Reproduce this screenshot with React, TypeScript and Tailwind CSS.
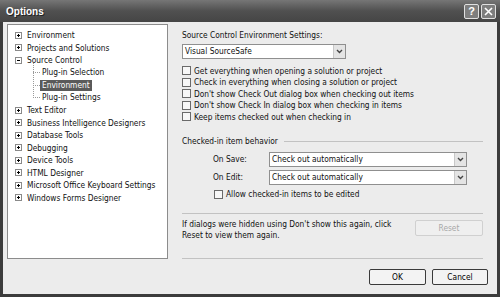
import React from "react";

const FONT = { fontFamily: '"DejaVu Sans Condensed", "DejaVu Sans", sans-serif' };

function Box({ minus }: { minus?: boolean }) {
  return (
    <div className="relative w-[7px] h-[7px] border border-[#8a8a8a] bg-white shrink-0">
      <div className="absolute left-[1px] top-[2px] w-[3px] h-[1px] bg-black" />
      {!minus && <div className="absolute left-[2px] top-[1px] w-[1px] h-[3px] bg-black" />}
    </div>
  );
}

function TopItem({ label, minus }: { label: string; minus?: boolean }) {
  return (
    <div className="h-[12.5px] flex items-center pl-[7px]">
      <Box minus={minus} />
      <span className="ml-[5px] whitespace-nowrap">{label}</span>
    </div>
  );
}

function ChildItem({ label, selected }: { label: string; selected?: boolean }) {
  return (
    <div className="h-[12.5px] flex items-center pl-[25px] relative">
      <div className="w-[7px] h-0 border-t border-dotted border-[#9a9a9a]" />
      <span
        className={
          "whitespace-nowrap px-[2px] leading-[11px] " +
          (selected ? "bg-[#5a5a5a] text-white" : "")
        }
      >
        {label}
      </span>
    </div>
  );
}

function Check({ label, className = "" }: { label: string; className?: string }) {
  return (
    <div className={"h-[11.5px] flex items-center " + className}>
      <div className="w-[9px] h-[9px] border border-[#6a6a6a] bg-[#f7f7f7] shrink-0" />
      <span className="ml-[3px] whitespace-nowrap">{label}</span>
    </div>
  );
}

function Arrow() {
  return (
    <div className="w-[12px] h-full border-l border-[#c8c8c8] bg-[#e4e4e4] flex items-center justify-center">
      <svg width="7" height="5" viewBox="0 0 7 5">
        <path d="M1 1 L3.5 3.5 L6 1" fill="none" stroke="#444" strokeWidth="1.4" />
      </svg>
    </div>
  );
}

function Select({ value, className = "" }: { value: string; className?: string }) {
  return (
    <div
      className={
        "h-[15px] border border-[#8f8f8f] bg-white flex items-center justify-between " + className
      }
    >
      <span className="pl-[2px] whitespace-nowrap">{value}</span>
      <Arrow />
    </div>
  );
}

function Btn({ label, disabled, className = "" }: { label: string; disabled?: boolean; className?: string }) {
  return (
    <div
      className={
        "h-[16px] rounded-[2px] flex items-center justify-center " +
        (disabled
          ? "border border-[#d0d0d0] text-[#a8a8a8] bg-[#efefef] "
          : "border border-[#3a3a3a] bg-[#f3f3f3] text-black ") +
        className
      }
    >
      {label}
    </div>
  );
}

export default function App() {
  return (
    <div
      className="w-[500px] h-[297px] flex flex-col bg-[#3c3c3c] text-[8.3px] text-[#111] overflow-hidden"
      style={FONT}
    >
      {/* title bar */}
      <div className="h-[22px] shrink-0 bg-gradient-to-b from-[#767676] via-[#505050] to-[#454545] flex items-center justify-between pl-[6px] pr-[4px]">
        <span
          className="text-white font-bold text-[10px] [text-shadow:1px_1px_0_#222]"
          style={{ fontFamily: '"Liberation Sans", Arial, sans-serif' }}
        >
          Options
        </span>
        <div className="flex gap-[2px] mt-[1px]">
          <div
            className="w-[15px] h-[15px] rounded-[2px] border border-[#e0e0e0] bg-[#7e7e7e] flex items-center justify-center text-white font-bold text-[11px]"
            style={{ fontFamily: '"Liberation Sans", Arial, sans-serif' }}
          >
            ?
          </div>
          <div className="w-[15px] h-[15px] rounded-[2px] border border-[#e0e0e0] bg-[#7e7e7e] flex items-center justify-center">
            <svg width="9" height="9" viewBox="0 0 9 9">
              <path d="M1 1 L8 8 M8 1 L1 8" stroke="white" strokeWidth="1.6" />
            </svg>
          </div>
        </div>
      </div>

      {/* body */}
      <div className="flex-1 mx-[3px] mb-[3px] bg-[#ececec] flex pt-[2px] pl-[4px]">
        {/* tree */}
        <div className="w-[161px] h-[235px] border border-[#8c8c8c] bg-white pt-[4px] shrink-0">
          <TopItem label="Environment" />
          <TopItem label="Projects and Solutions" />
          <TopItem label="Source Control" minus />
          <div className="relative">
            <div className="absolute left-[25px] top-[-4px] h-[35px] border-l border-dotted border-[#9a9a9a]" />
            <ChildItem label="Plug-in Selection" />
            <ChildItem label="Environment" selected />
            <ChildItem label="Plug-in Settings" />
          </div>
          <TopItem label="Text Editor" />
          <TopItem label="Business Intelligence Designers" />
          <TopItem label="Database Tools" />
          <TopItem label="Debugging" />
          <TopItem label="Device Tools" />
          <TopItem label="HTML Designer" />
          <TopItem label="Microsoft Office Keyboard Settings" />
          <TopItem label="Windows Forms Designer" />
        </div>

        {/* right */}
        <div className="ml-[14px] w-[306px] flex flex-col">
          <div className="h-[12px] mt-[5px] flex items-center">Source Control Environment Settings:</div>
          <Select value="Visual SourceSafe" className="w-[164px] mt-[3px]" />
          <div className="mt-[6px] flex flex-col">
            <Check label="Get everything when opening a solution or project" />
            <Check label="Check in everything when closing a solution or project" />
            <Check label="Don't show Check Out dialog box when checking out items" />
            <Check label="Don't show Check In dialog box when checking in items" />
            <Check label="Keep items checked out when checking in" />
          </div>
          <div className="mt-[13px] h-[12px] flex items-center w-[301px]">
            <span className="whitespace-nowrap">Checked-in item behavior</span>
            <div className="flex-1 ml-[6px] h-0 border-t border-[#c2c2c2]" />
          </div>
          <div className="mt-[4px] flex items-center">
            <span className="w-[87px] shrink-0 pl-[31px] whitespace-nowrap">On Save:</span>
            <Select value="Check out automatically" className="w-[198px]" />
          </div>
          <div className="mt-[3px] flex items-center">
            <span className="w-[87px] shrink-0 pl-[31px] whitespace-nowrap">On Edit:</span>
            <Select value="Check out automatically" className="w-[198px]" />
          </div>
          <Check label="Allow checked-in items to be edited" className="mt-[4px] ml-[32px]" />
          <div className="mt-[13px] w-[301px] h-0 border-t border-[#c2c2c2]" />
          <div className="mt-[5px] flex justify-between w-[301px]">
            <div className="leading-[11px]">
              If dialogs were hidden using Don't show this again, click
              <br />
              Reset to view them again.
            </div>
            <Btn label="Reset" disabled className="w-[68px] mt-[1px]" />
          </div>
          <div className="mt-[17px] w-[301px] h-0 border-t border-[#c2c2c2]" />
          <div className="mt-[10px] flex justify-end gap-[6px]">
            <Btn label="OK" className="w-[57px]" />
            <Btn label="Cancel" className="w-[56px]" />
          </div>
        </div>
      </div>
    </div>
  );
}
